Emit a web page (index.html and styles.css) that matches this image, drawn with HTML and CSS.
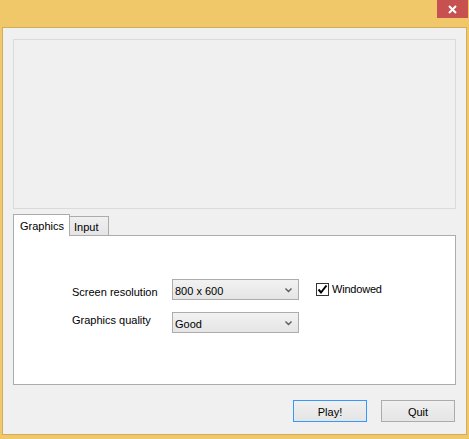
FILE: index.html
```html
<!DOCTYPE html>
<html>
<head>
<meta charset="utf-8">
<link rel="stylesheet" href="styles.css">
</head>
<body>
<div class="window">
  <div class="titlebar">
    <div class="close">
      <svg width="9" height="9" viewBox="0 0 9 9"><path d="M1 1 L8 8 M8 1 L1 8" stroke="#fff" stroke-width="2" fill="none"/></svg>
    </div>
  </div>
  <div class="client">
    <div class="preview"></div>
    <div class="tabs">
      <div class="tabstrip">
        <div class="tab active">Graphics</div>
        <div class="tab input">Input</div>
      </div>
      <div class="tabpanel">
        <div class="form">
          <div class="label l1">Screen resolution</div>
          <div class="select">
            <span>800 x 600</span>
            <svg class="chev" width="7" height="5" viewBox="0 0 7 5"><path d="M0.5 0.5 L3.5 3.5 L6.5 0.5" stroke="#5a5a5a" stroke-width="1.4" fill="none"/></svg>
          </div>
          <div class="check">
            <span class="box">
              <svg width="11" height="11" viewBox="0 0 11 11"><path d="M1.5 5.5 L4 8.5 L9.5 1.5" stroke="#000" stroke-width="2" fill="none"/></svg>
            </span>
            <span class="checklabel">Windowed</span>
          </div>
          <div class="label l2">Graphics quality</div>
          <div class="select">
            <span>Good</span>
            <svg class="chev" width="7" height="5" viewBox="0 0 7 5"><path d="M0.5 0.5 L3.5 3.5 L6.5 0.5" stroke="#5a5a5a" stroke-width="1.4" fill="none"/></svg>
          </div>
        </div>
      </div>
    </div>
    <div class="buttons">
      <div class="btn default">Play!</div>
      <div class="btn">Quit</div>
    </div>
  </div>
</div>
</body>
</html>
```
FILE: styles.css
```css
html, body {
  margin: 0;
  padding: 0;
}
body {
  width: 469px;
  height: 439px;
  background: #f0c86a;
  font-family: "Liberation Sans", Arial, sans-serif;
  font-size: 11px;
  color: #000;
  overflow: hidden;
}
.window {
  width: 469px;
  height: 439px;
  box-sizing: border-box;
  padding: 0 2px 4px 2px;
  display: flex;
  flex-direction: column;
}
.titlebar {
  height: 27px;
  display: flex;
  justify-content: flex-end;
  align-items: flex-start;
}
.close {
  width: 31px;
  height: 18px;
  background: #c75050;
  display: flex;
  align-items: center;
  justify-content: center;
  margin-right: -1px;
}
.client {
  flex: 1;
  background: #f0f0f0;
  border: 1px solid #d3ad5b;
  padding: 11px 10px 12px 10px;
  display: flex;
  flex-direction: column;
}
.preview {
  height: 170px;
  box-sizing: border-box;
  border: 1px solid #dadada;
}
.tabs {
  margin-top: 5px;
  display: flex;
  flex-direction: column;
}
.tabstrip {
  height: 21px;
  display: flex;
  align-items: flex-end;
}
.tab {
  box-sizing: border-box;
  height: 19px;
  padding: 1px 0 0 4px;
  border: 1px solid #acacac;
  border-bottom: none;
  background: linear-gradient(#f0f0f0, #e5e5e5);
  line-height: 19px;
}
.tab.input {
  width: 40px;
}
.tab.active {
  width: 57px;
  height: 22px;
  margin-bottom: -1px;
  background: #fff;
  padding: 2px 0 0 6px;
  line-height: 19px;
  position: relative;
  z-index: 1;
  margin-right: -1px;
}
.tabpanel {
  height: 150px;
  box-sizing: border-box;
  border: 1px solid #acacac;
  background: #fff;
  padding: 43px 0 0 58px;
}
.form {
  display: grid;
  grid-template-columns: 100px 127px auto;
  grid-template-rows: 21px 21px;
  row-gap: 12px;
}
.label {
  line-height: 13px;
}
.l1 {
  margin-top: 7px;
}
.l2 {
  margin-top: 2px;
}
.select {
  box-sizing: border-box;
  height: 21px;
  border: 1px solid #acacac;
  background: linear-gradient(#f2f2f2, #e5e5e5);
  display: flex;
  align-items: center;
  justify-content: space-between;
  padding: 2px 6px 0 2px;
}
.chev {
  margin-top: 0;
}
.check {
  margin-left: 17px;
  margin-top: 4px;
  display: flex;
  align-items: flex-start;
  gap: 3px;
}
.box {
  box-sizing: border-box;
  width: 13px;
  height: 13px;
  border: 1px solid #333;
  background: #fff;
  display: flex;
  align-items: center;
  justify-content: center;
}
.checklabel {
  line-height: 13px;
  letter-spacing: -0.2px;
}
.buttons {
  margin-top: 15px;
  display: flex;
  justify-content: flex-end;
  gap: 14px;
  padding-right: 1px;
}
.btn {
  box-sizing: border-box;
  width: 74px;
  height: 22px;
  border: 1px solid #acacac;
  background: linear-gradient(#f0f0f0, #e5e5e5);
  display: flex;
  align-items: center;
  justify-content: center;
  padding-top: 1px;
}
.btn.default {
  border-color: #3399ff;
}
```
